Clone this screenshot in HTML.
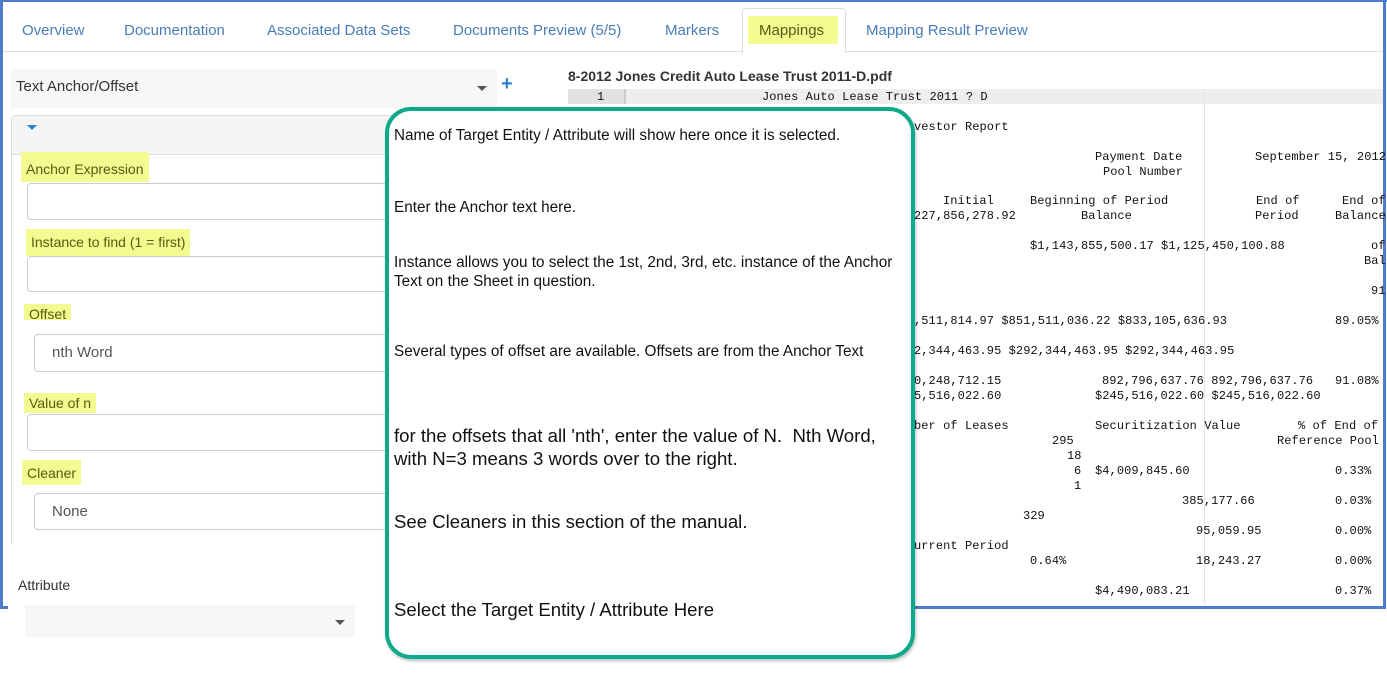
<!DOCTYPE html>
<html><head><meta charset="utf-8"><style>
*{margin:0;padding:0;box-sizing:border-box}
body{width:1387px;height:673px;position:relative;background:#fff;font-family:"Liberation Sans",Arial,sans-serif;overflow:hidden}
.a{position:absolute;white-space:nowrap}
.tab{position:absolute;top:22px;font-size:15px;color:#4a7cb8}
.m{position:absolute;font-family:"Liberation Mono",monospace;font-size:12px;color:#111;white-space:pre;line-height:14px;letter-spacing:0.08px}
.hl{position:absolute;background:#f3fa8f;color:#5a5a10;font-size:14px;padding:0 5px}
.inp{position:absolute;border:1px solid #ccc;border-radius:4px;background:#fff}
.ct{position:absolute;left:394px;color:#111;white-space:nowrap}
</style></head><body>
<div class="a" style="left:0;top:0;width:1387px;height:2px;background:#4d7ccc"></div>
<div class="a" style="left:0;top:0;width:3px;height:609px;background:#4d7ccc"></div>
<div class="a" style="left:1383px;top:0;width:3px;height:609px;background:#4d7ccc"></div>
<div class="a" style="left:905px;top:606px;width:481px;height:3px;background:#4d7ccc"></div>
<div class="a" style="left:0;top:606px;width:8px;height:3px;background:#4d7ccc"></div>

<div class="a" style="left:3px;top:51px;width:1380px;height:1px;background:#ddd"></div>
<div class="a" style="left:742px;top:8px;width:104px;height:45px;border:1px solid #ddd;border-bottom:none;border-radius:4px 4px 0 0;background:#fff"></div>
<div class="a" style="left:748px;top:16px;width:90px;height:28px;background:#f3fa8f"></div>
<div class="tab" style="left:22px">Overview</div>
<div class="tab" style="left:124px">Documentation</div>
<div class="tab" style="left:267px">Associated Data Sets</div>
<div class="tab" style="left:453px">Documents Preview (5/5)</div>
<div class="tab" style="left:665px">Markers</div>
<div class="tab" style="left:759px;color:#5a5a10">Mappings</div>
<div class="tab" style="left:866px">Mapping Result Preview</div>

<div class="a" style="left:10px;top:69px;width:487px;height:39px;background:#f7f7f7"></div>
<div class="a" style="left:16px;top:78px;font-size:15px;color:#333">Text Anchor/Offset</div>
<div class="a" style="left:477px;top:86px;border-left:5px solid transparent;border-right:5px solid transparent;border-top:5px solid #555"></div>
<div class="a" style="left:501px;top:73px;font-size:20px;font-weight:bold;color:#2f7fd0">+</div>
<div class="a" style="left:11px;top:115px;width:560px;height:430px;border:1px solid #ddd;border-bottom:none;border-radius:4px 4px 0 0"></div>
<div class="a" style="left:12px;top:116px;width:560px;height:39px;background:#f5f5f5;border-bottom:1px solid #ddd"></div>
<div class="a" style="left:27px;top:125px;border-left:5px solid transparent;border-right:5px solid transparent;border-top:5px solid #2f7fd0"></div>

<div class="hl" style="left:21px;top:152px;height:30px;line-height:34px">Anchor Expression</div>
<div class="inp" style="left:27px;top:183px;width:420px;height:37px"></div>
<div class="hl" style="left:26px;top:229px;height:27px;line-height:26px">Instance to find (1 = first)</div>
<div class="inp" style="left:27px;top:256px;width:420px;height:36px"></div>
<div class="hl" style="left:24px;top:304px;height:16px;line-height:21px;overflow:hidden">Offset</div>
<div class="inp" style="left:34px;top:334px;width:420px;height:38px"></div>
<div class="a" style="left:52px;top:344px;font-size:15px;color:#555">nth Word</div>
<div class="hl" style="left:24px;top:393px;height:20px;line-height:20px">Value of n</div>
<div class="inp" style="left:27px;top:414px;width:420px;height:37px"></div>
<div class="hl" style="left:22px;top:460px;height:25px;line-height:27px">Cleaner</div>
<div class="inp" style="left:34px;top:493px;width:420px;height:37px"></div>
<div class="a" style="left:52px;top:503px;font-size:15px;color:#555">None</div>

<div class="a" style="left:8px;top:557px;width:378px;height:116px;background:#fff"></div>
<div class="a" style="left:18px;top:577px;font-size:14px;color:#333">Attribute</div>
<div class="a" style="left:25px;top:605px;width:330px;height:32px;background:#f7f7f7"></div>
<div class="a" style="left:335px;top:620px;border-left:5px solid transparent;border-right:5px solid transparent;border-top:5px solid #555"></div>

<div class="a" style="left:568px;top:68px;font-size:14px;font-weight:bold;color:#333">8-2012 Jones Credit Auto Lease Trust 2011-D.pdf</div>
<div class="a" style="left:568px;top:89px;width:815px;height:15px;background:#eee"></div>
<div class="a" style="left:568px;top:89px;width:56px;height:15px;background:#e2e2e2"></div>
<div class="a" style="left:624px;top:89px;width:2px;height:15px;background:#ccc"></div>
<div class="a" style="left:1204px;top:89px;width:1px;height:515px;background:#e3e3e3"></div>
<div class="m" style="left:597px;top:90px">1</div>
<div class="m" style="left:762px;top:90px">Jones Auto Lease Trust 2011 ? D</div>
<div class="m" style="left:914px;top:120px">vestor Report</div>
<div class="m" style="left:1095px;top:150px">Payment Date</div>
<div class="m" style="left:1255px;top:150px">September 15, 2012</div>
<div class="m" style="left:1103px;top:165px">Pool Number</div>
<div class="m" style="left:943px;top:194px">Initial</div>
<div class="m" style="left:1030px;top:194px">Beginning of Period</div>
<div class="m" style="left:1256px;top:194px">End of</div>
<div class="m" style="left:1342px;top:194px">End of</div>
<div class="m" style="left:914px;top:209px">227,856,278.92</div>
<div class="m" style="left:1081px;top:209px">Balance</div>
<div class="m" style="left:1255px;top:209px">Period</div>
<div class="m" style="left:1335px;top:209px">Balance</div>
<div class="m" style="left:1030px;top:239px">$1,143,855,500.17 $1,125,450,100.88</div>
<div class="m" style="left:1371px;top:239px">of</div>
<div class="m" style="left:1364px;top:254px">Bal</div>
<div class="m" style="left:1371px;top:284px">91</div>
<div class="m" style="left:914px;top:314px">,511,814.97 $851,511,036.22 $833,105,636.93</div>
<div class="m" style="left:1335px;top:314px">89.05%</div>
<div class="m" style="left:914px;top:344px">2,344,463.95 $292,344,463.95 $292,344,463.95</div>
<div class="m" style="left:914px;top:374px">0,248,712.15</div>
<div class="m" style="left:1102px;top:374px">892,796,637.76 892,796,637.76</div>
<div class="m" style="left:1335px;top:374px">91.08%</div>
<div class="m" style="left:914px;top:389px">5,516,022.60</div>
<div class="m" style="left:1095px;top:389px">$245,516,022.60 $245,516,022.60</div>
<div class="m" style="left:914px;top:419px">ber of Leases</div>
<div class="m" style="left:1095px;top:419px">Securitization Value</div>
<div class="m" style="left:1298px;top:419px">% of End of</div>
<div class="m" style="left:1052px;top:434px">295</div>
<div class="m" style="left:1277px;top:434px">Reference Pool</div>
<div class="m" style="left:1067px;top:449px">18</div>
<div class="m" style="left:1074px;top:464px">6</div>
<div class="m" style="left:1095px;top:464px">$4,009,845.60</div>
<div class="m" style="left:1335px;top:464px">0.33%</div>
<div class="m" style="left:1074px;top:479px">1</div>
<div class="m" style="left:1182px;top:494px">385,177.66</div>
<div class="m" style="left:1335px;top:494px">0.03%</div>
<div class="m" style="left:1023px;top:509px">329</div>
<div class="m" style="left:1196px;top:524px">95,059.95</div>
<div class="m" style="left:1335px;top:524px">0.00%</div>
<div class="m" style="left:914px;top:539px">urrent Period</div>
<div class="m" style="left:1030px;top:554px">0.64%</div>
<div class="m" style="left:1196px;top:554px">18,243.27</div>
<div class="m" style="left:1335px;top:554px">0.00%</div>
<div class="m" style="left:1095px;top:584px">$4,490,083.21</div>
<div class="m" style="left:1335px;top:584px">0.37%</div>

<div class="a" style="left:385px;top:107px;width:530px;height:552px;border:4px solid #0caa8a;border-radius:26px;background:#fff;box-shadow:1px 2px 3px rgba(0,0,0,.25)"></div>
<div class="ct" style="top:127px;font-size:15.3px">Name of Target Entity / Attribute will show here once it is selected.</div>
<div class="ct" style="top:199px;font-size:15.3px">Enter the Anchor text here.</div>
<div class="ct" style="top:253px;font-size:15.3px;line-height:19px">Instance allows you to select the 1st, 2nd, 3rd, etc. instance of the Anchor<br>Text on the Sheet in question.</div>
<div class="ct" style="top:343px;font-size:15.3px">Several types of offset are available. Offsets are from the Anchor Text</div>
<div class="ct" style="top:424px;font-size:18.6px;line-height:23px">for the offsets that all 'nth', enter the value of N.&nbsp; Nth Word,<br>with N=3 means 3 words over to the right.</div>
<div class="ct" style="top:511px;font-size:18.6px">See Cleaners in this section of the manual.</div>
<div class="ct" style="top:599px;font-size:18.6px">Select the Target Entity / Attribute Here</div>
</body></html>
